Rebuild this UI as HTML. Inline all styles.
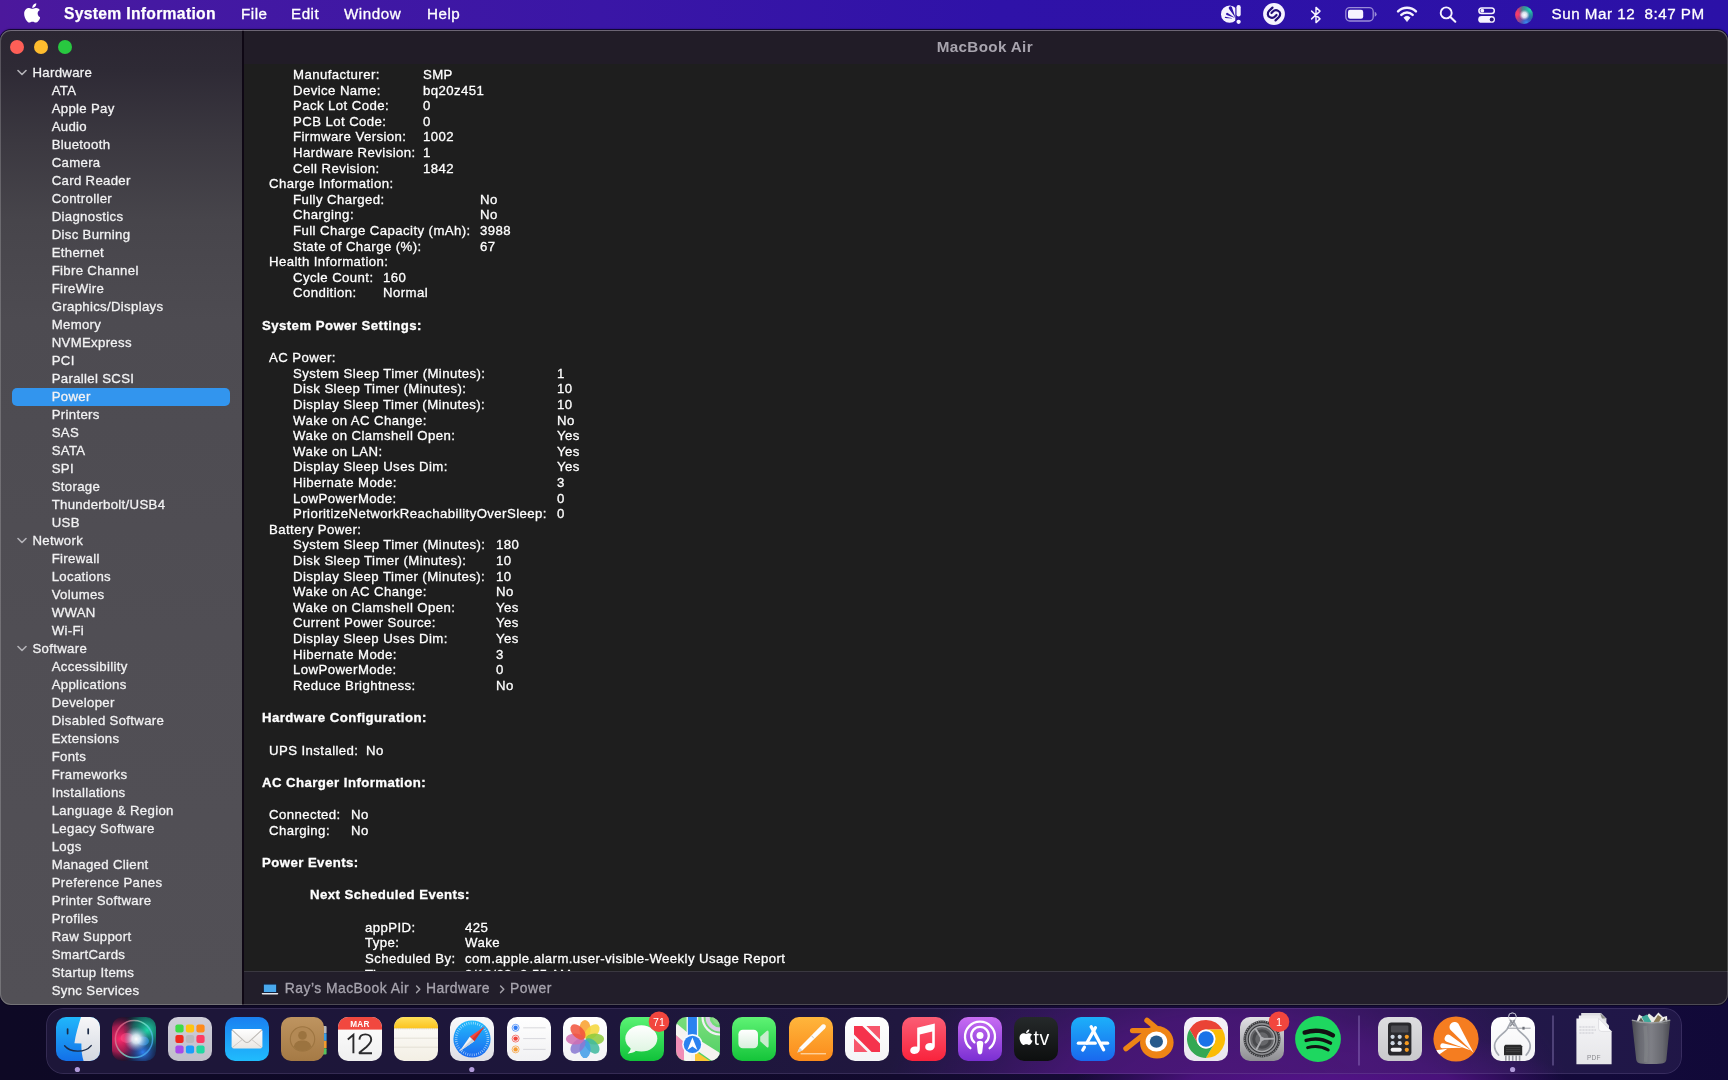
<!DOCTYPE html>
<html lang="en">
<head>
<meta charset="utf-8">
<title>System Information</title>
<style>
*{box-sizing:border-box;margin:0;padding:0}
html,body{width:1728px;height:1080px;overflow:hidden}
body{position:relative;font-family:"Liberation Sans",sans-serif;color:#fff;background:#120a32;-webkit-font-smoothing:antialiased}
#wall{position:absolute;left:0;top:0;width:1728px;height:1080px;
 background:
  radial-gradient(ellipse 250px 70px at 1320px 1092px, rgba(84,20,138,1) 0%, rgba(74,18,124,.96) 55%, rgba(56,15,102,.6) 80%, rgba(36,12,76,0) 100%),
  linear-gradient(90deg,#0e0925 0px,#0f0928 600px,#120a2e 900px,#160b36 1100px,#170b3a 1400px,#130a3a 1600px,#110938 1728px);}
/* ---------- menu bar ---------- */
#menubar{will-change:transform;position:absolute;left:0;top:0;width:1728px;height:44px;
 background:linear-gradient(90deg,#4c189c 0px,#4519a2 150px,#3a16a6 600px,#2f12a8 1000px,#2b11a7 1728px);}
#menubar .mi{position:absolute;top:0;height:28px;line-height:28px;font-size:15.2px;letter-spacing:.52px;color:#fff;white-space:nowrap;-webkit-text-stroke:.3px #fff}
#menubar .mi.app{font-weight:bold;font-size:15.7px;letter-spacing:.3px;-webkit-text-stroke:.25px #fff}
#menubar svg{position:absolute}
/* ---------- window ---------- */
#win{position:absolute;left:0;top:30px;width:1728px;height:975px;border-radius:11px;overflow:hidden;background:#1e1e1e;
 box-shadow:0 0 0 1px rgba(10,5,30,.7),0 -1px 1.5px rgba(10,5,30,.55)}
#winedge{position:absolute;left:0;top:30px;width:1728px;height:975px;border-radius:11px;pointer-events:none;
 box-shadow:inset 0 0 0 1px rgba(255,255,255,.2),inset 0 1px 0 rgba(225,205,255,.2)}
#side{will-change:transform;position:absolute;left:0;top:0;width:242px;height:975px;
 background:linear-gradient(180deg,#2b2632 0px,#2e2a35 40px,#3b3840 110px,#47454b 190px,#4d4b51 290px,#504e54 600px,#525056 975px)}
#divider{position:absolute;left:242px;top:0;width:2px;height:975px;background:#0e0714}
.tl{position:absolute;top:10px;width:14px;height:14px;border-radius:50%}
.sb{position:absolute;height:18px;line-height:18px;font-size:13.2px;color:#f2f2f3;white-space:nowrap;letter-spacing:.32px;-webkit-text-stroke:.3px #f2f2f3}
.sb.g{left:32.5px}
.sb.c{left:51.7px}
#sbt{position:absolute;left:0;top:0;width:242px;height:975px;will-change:transform;transform:translateY(.55px)}
.chev{position:absolute;left:16.8px}
.sel{position:absolute;left:12px;width:218px;height:18px;border-radius:5px;background:#3295ee}
#tbar{will-change:transform;position:absolute;left:244px;top:0;width:1484px;height:34px;background:#211c27}
#title{position:absolute;left:-1.2px;width:1484px;top:.8px;height:32px;line-height:32px;text-align:center;font-size:15.2px;font-weight:bold;color:#a8a4ae;letter-spacing:.36px}
#content{will-change:transform;position:absolute;left:244px;top:34px;width:1484px;height:907px;background:#1e1e1e;overflow:hidden}
.ml{position:absolute;height:15.6px;line-height:15.6px;font-size:13.2px;letter-spacing:.42px;color:#fff;white-space:nowrap;-webkit-text-stroke:.3px #fff}
.ml.b{height:18px;line-height:18px;font-weight:bold;letter-spacing:.44px;-webkit-text-stroke:.32px #fff}
#pbar{will-change:transform;position:absolute;left:244px;top:941px;width:1484px;height:34px;background:#221e2a;border-top:1px solid #3a3840}
#pbar .pt{position:absolute;top:.3px;height:32px;line-height:32px;font-size:13.9px;color:#a7a4ae;white-space:nowrap;letter-spacing:.47px;-webkit-text-stroke:.3px #a7a4ae}
#pbar .pc{position:absolute;top:12px}
#pbar .pc path{fill:none;stroke:#a3a1a9;stroke-width:1.5;stroke-linecap:round;stroke-linejoin:round}
/* ---------- dock ---------- */
#dock{position:absolute;left:46px;top:1007.5px;width:1636px;height:66px;border-radius:17px;
 background:radial-gradient(ellipse 345px 190px at 1182px 100px, rgba(76,23,122,.96) 0%, rgba(72,23,118,.92) 48%, rgba(60,22,104,.55) 74%, rgba(44,22,84,0) 100%),rgba(72,58,112,.27);
 box-shadow:inset 0 0 0 1px rgba(190,170,230,.15)}
.di{position:absolute;overflow:visible;will-change:transform}
.dot{position:absolute;top:1066.4px;width:5.2px;height:5.2px;border-radius:50%;background:#b6a3dc}
.dsep{position:absolute;top:1015.5px;width:1.2px;height:50px;background:rgba(190,170,235,.5)}
</style>
</head>
<body>
<div id="wall"></div>

<div id="menubar">
<svg style="left:23.7px;top:1.9px" width="16.46" height="21.94" viewBox="0 0 384 512"><path fill="#fff" d="M318.7 268.7c-.2-36.7 16.4-64.4 50-84.8-18.8-26.9-47.2-41.7-84.7-44.6-35.5-2.8-74.3 20.7-88.5 20.7-15 0-49.4-19.7-76.4-19.7C63.3 141.2 4 184.8 4 273.5q0 39.3 14.4 81.2c12.8 36.7 59 126.7 107.2 125.2 25.2-.6 43-17.9 75.8-17.9 31.8 0 48.3 17.9 76.4 17.9 48.6-.7 90.4-82.5 102.6-119.3-65.2-30.7-61.7-90-61.7-91.9zm-56.6-164.2c27.3-32.4 24.8-61.9 24-72.5-24.1 1.4-52 16.4-67.9 34.9-17.5 19.800-27.800 44.300-25.600 71.900 26.100 2 49.900-11.400 69.500-34.300z"/></svg>
<div class="mi app" style="left:64px">System Information</div>
<div class="mi" style="left:241px">File</div>
<div class="mi" style="left:291px">Edit</div>
<div class="mi" style="left:344px">Window</div>
<div class="mi" style="left:427px">Help</div>
<svg style="left:1218px;top:0" width="28" height="28" viewBox="-14 -14 28 28"><defs><mask id="m1"><rect x="-14" y="-14" width="28" height="28" fill="#000"/><circle cx="-2.4" cy="0.2" r="8.6" fill="#fff"/><path d="M3.60 4.00 L-0.09 -6.78 A1.7 1.7 0 0 0 -3.11 -5.22 Z" fill="#000"/><path d="M3.20 4.00 L-4.29 -1.03 A1.15 1.15 0 0 0 -5.31 1.03 Z" fill="#000"/><path d="M1.60 4.40 L-6.53 2.80 A0.6 0.6 0 0 0 -6.67 4.00 Z" fill="#000"/><rect x="3.3" y="-11" width="6.6" height="24" rx="3" fill="#000"/></mask></defs><rect x="-14" y="-14" width="28" height="28" fill="#f6f3ff" mask="url(#m1)"/><rect x="4.5" y="-8.9" width="4.2" height="11.4" rx="2.1" fill="#f6f3ff"/><circle cx="6.600" cy="7.8" r="2.15" fill="#f6f3ff"/></svg>
<svg style="left:1259.8px;top:0.3px" width="28" height="28" viewBox="-14 -14 28 28"><circle r="10.9" fill="#f6f3ff"/><g fill="none" stroke="#220d78" stroke-width="2.2" stroke-linecap="round"><path d="M-1.5 -6.4 L-4.8 -3.2 C-7 -1 -6.5 1.8 -4.2 3.1 C-2.3 4.2 -0.1 3.6 1.3 2.2 L2.5 1"/><path d="M1.5 6.4 L4.8 3.2 C7 1 6.500 -1.8 4.2 -3.1 C2.3 -4.2 0.1 -3.6 -1.3 -2.2 L-2.5 -1"/></g></svg>
<svg style="left:1305.7px;top:5px" width="20" height="20" viewBox="-10 -10 20 20"><path d="M-4.4 -3.9 L4 3.9 L0 7.6 L0 -7.6 L4 -3.9 L-4.4 3.9" fill="none" stroke="#f6f3ff" stroke-width="1.45" stroke-linejoin="round" stroke-linecap="round"/></svg>
<svg style="left:1343px;top:4px" width="36" height="20" viewBox="0 0 36 20"><rect x="2.8" y="3.6" width="27.4" height="13.4" rx="3.9" fill="none" stroke="#f6f3ff" stroke-opacity=".55" stroke-width="1.3"/><path d="M31.7 7.8 Q33.6 8.6 33.6 10.3 Q33.6 12 31.7 12.8 Z" fill="#f6f3ff" fill-opacity=".55"/><rect x="5" y="5.8" width="15.2" height="9" rx="2.1" fill="#f6f3ff"/></svg>
<svg style="left:1395.4px;top:2px" width="24" height="24" viewBox="-12 -12 24 24"><path d="M-8.93 -2.68 A13.1 13.1 0 0 1 8.93 -2.68" fill="none" stroke="#f6f3ff" stroke-width="2.5" stroke-linecap="round"/><path d="M-5.66 0.83 A8.3 8.3 0 0 1 5.66 0.83" fill="none" stroke="#f6f3ff" stroke-width="2.5" stroke-linecap="round"/><path d="M0 7.5 L-3.07 3.61 A4.5 4.5 0 0 1 3.07 3.61 Z" fill="#f6f3ff" stroke="#f6f3ff" stroke-width=".8" stroke-linejoin="round"/></svg>
<svg style="left:1436px;top:3px" width="24" height="24" viewBox="0 0 24 24"><circle cx="10.2" cy="9.9" r="5.5" fill="none" stroke="#f6f3ff" stroke-width="1.9"/><path d="M14.4 14.1 L19.3 18.7" stroke="#f6f3ff" stroke-width="2.1" stroke-linecap="round"/></svg>
<svg style="left:1475px;top:4px" width="24" height="22" viewBox="0 0 24 22"><rect x="3.9" y="3.9" width="15.4" height="5.6" rx="2.8" fill="none" stroke="#f6f3ff" stroke-width="1.5"/><circle cx="7.3" cy="6.7" r="1.9" fill="#f6f3ff"/><rect x="3.2" y="12" width="16.8" height="6.8" rx="3.4" fill="#f6f3ff"/><circle cx="16.7" cy="15.4" r="2" fill="#2a127e"/></svg>
<svg style="left:1513px;top:3.6px" width="22" height="22" viewBox="-11 -11 22 22"><defs><clipPath id="so"><circle r="8.9"/></clipPath><radialGradient id="s1" cx=".2" cy=".45" r=".6"><stop offset="0" stop-color="#ff3b6b"/><stop offset=".6" stop-color="#d83a72" stop-opacity=".8"/><stop offset="1" stop-color="#7a2a8a" stop-opacity="0"/></radialGradient><radialGradient id="s2" cx=".78" cy=".25" r=".55"><stop offset="0" stop-color="#25d8b6"/><stop offset=".65" stop-color="#1f9f9a" stop-opacity=".7"/><stop offset="1" stop-color="#1f6f9a" stop-opacity="0"/></radialGradient><radialGradient id="s3" cx=".6" cy=".85" r=".5"><stop offset="0" stop-color="#3a8af5"/><stop offset="1" stop-color="#2a4ab0" stop-opacity="0"/></radialGradient><radialGradient id="s4" cx=".52" cy=".5" r=".24"><stop offset="0" stop-color="#fff"/><stop offset=".5" stop-color="#f4f4ff" stop-opacity=".8"/><stop offset="1" stop-color="#ccd" stop-opacity="0"/></radialGradient></defs><g clip-path="url(#so)"><rect x="-11" y="-11" width="22" height="22" fill="#3a3a8a"/><rect x="-11" y="-11" width="22" height="22" fill="url(#s1)"/><rect x="-11" y="-11" width="22" height="22" fill="url(#s2)"/><rect x="-11" y="-11" width="22" height="22" fill="url(#s3)"/><rect x="-11" y="-11" width="22" height="22" fill="url(#s4)"/></g></svg>
<div class="mi" style="left:1551.6px;letter-spacing:.5px">Sun Mar 12&nbsp; 8:47 PM</div>
</div>

<div id="win">
 <div id="side">
  <div class="tl" style="left:10px;background:#fe5f57"></div>
  <div class="tl" style="left:34px;background:#febc2e"></div>
  <div class="tl" style="left:58px;background:#28c840"></div>
<svg class="chev" style="top:39.4px" width="10" height="8" viewBox="0 0 10 8"><path d="M1 1.5 L5 5.5 L9 1.5" fill="none" stroke="#b4b3b8" stroke-width="1.6" stroke-linecap="round" stroke-linejoin="round"/></svg>
<div class="sel" style="top:357.5px"></div>
<svg class="chev" style="top:507.4px" width="10" height="8" viewBox="0 0 10 8"><path d="M1 1.5 L5 5.5 L9 1.5" fill="none" stroke="#b4b3b8" stroke-width="1.6" stroke-linecap="round" stroke-linejoin="round"/></svg>
<svg class="chev" style="top:615.4px" width="10" height="8" viewBox="0 0 10 8"><path d="M1 1.5 L5 5.5 L9 1.5" fill="none" stroke="#b4b3b8" stroke-width="1.6" stroke-linecap="round" stroke-linejoin="round"/></svg>
<div id="sbt"><div class="sb g" style="top:33px">Hardware</div>
<div class="sb c" style="top:51px">ATA</div>
<div class="sb c" style="top:69px">Apple Pay</div>
<div class="sb c" style="top:87px">Audio</div>
<div class="sb c" style="top:105px">Bluetooth</div>
<div class="sb c" style="top:123px">Camera</div>
<div class="sb c" style="top:141px">Card Reader</div>
<div class="sb c" style="top:159px">Controller</div>
<div class="sb c" style="top:177px">Diagnostics</div>
<div class="sb c" style="top:195px">Disc Burning</div>
<div class="sb c" style="top:213px">Ethernet</div>
<div class="sb c" style="top:231px">Fibre Channel</div>
<div class="sb c" style="top:249px">FireWire</div>
<div class="sb c" style="top:267px">Graphics/Displays</div>
<div class="sb c" style="top:285px">Memory</div>
<div class="sb c" style="top:303px">NVMExpress</div>
<div class="sb c" style="top:321px">PCI</div>
<div class="sb c" style="top:339px">Parallel SCSI</div>
<div class="sb c" style="top:357px">Power</div>
<div class="sb c" style="top:375px">Printers</div>
<div class="sb c" style="top:393px">SAS</div>
<div class="sb c" style="top:411px">SATA</div>
<div class="sb c" style="top:429px">SPI</div>
<div class="sb c" style="top:447px">Storage</div>
<div class="sb c" style="top:465px">Thunderbolt/USB4</div>
<div class="sb c" style="top:483px">USB</div>
<div class="sb g" style="top:501px">Network</div>
<div class="sb c" style="top:519px">Firewall</div>
<div class="sb c" style="top:537px">Locations</div>
<div class="sb c" style="top:555px">Volumes</div>
<div class="sb c" style="top:573px">WWAN</div>
<div class="sb c" style="top:591px">Wi-Fi</div>
<div class="sb g" style="top:609px">Software</div>
<div class="sb c" style="top:627px">Accessibility</div>
<div class="sb c" style="top:645px">Applications</div>
<div class="sb c" style="top:663px">Developer</div>
<div class="sb c" style="top:681px">Disabled Software</div>
<div class="sb c" style="top:699px">Extensions</div>
<div class="sb c" style="top:717px">Fonts</div>
<div class="sb c" style="top:735px">Frameworks</div>
<div class="sb c" style="top:753px">Installations</div>
<div class="sb c" style="top:771px">Language &amp; Region</div>
<div class="sb c" style="top:789px">Legacy Software</div>
<div class="sb c" style="top:807px">Logs</div>
<div class="sb c" style="top:825px">Managed Client</div>
<div class="sb c" style="top:843px">Preference Panes</div>
<div class="sb c" style="top:861px">Printer Software</div>
<div class="sb c" style="top:879px">Profiles</div>
<div class="sb c" style="top:897px">Raw Support</div>
<div class="sb c" style="top:915px">SmartCards</div>
<div class="sb c" style="top:933px">Startup Items</div>
<div class="sb c" style="top:951px">Sync Services</div></div>
 </div>
 <div id="divider"></div>
 <div id="tbar"><div id="title">MacBook Air</div></div>
 <div id="content">
<div class="ml" style="top:-12.60px;left:49px">Serial Number:</div>
<div class="ml" style="top:-12.60px;left:179px">D865123A1BCDKRNBY</div>
<div class="ml" style="top:3.00px;left:49px">Manufacturer:</div>
<div class="ml" style="top:3.00px;left:179px">SMP</div>
<div class="ml" style="top:18.60px;left:49px">Device Name:</div>
<div class="ml" style="top:18.60px;left:179px">bq20z451</div>
<div class="ml" style="top:34.20px;left:49px">Pack Lot Code:</div>
<div class="ml" style="top:34.20px;left:179px">0</div>
<div class="ml" style="top:49.80px;left:49px">PCB Lot Code:</div>
<div class="ml" style="top:49.80px;left:179px">0</div>
<div class="ml" style="top:65.40px;left:49px">Firmware Version:</div>
<div class="ml" style="top:65.40px;left:179px">1002</div>
<div class="ml" style="top:81.00px;left:49px">Hardware Revision:</div>
<div class="ml" style="top:81.00px;left:179px">1</div>
<div class="ml" style="top:96.60px;left:49px">Cell Revision:</div>
<div class="ml" style="top:96.60px;left:179px">1842</div>
<div class="ml" style="top:112.20px;left:25px">Charge Information:</div>
<div class="ml" style="top:127.80px;left:49px">Fully Charged:</div>
<div class="ml" style="top:127.80px;left:236px">No</div>
<div class="ml" style="top:143.40px;left:49px">Charging:</div>
<div class="ml" style="top:143.40px;left:236px">No</div>
<div class="ml" style="top:159.00px;left:49px">Full Charge Capacity (mAh):</div>
<div class="ml" style="top:159.00px;left:236px">3988</div>
<div class="ml" style="top:174.60px;left:49px">State of Charge (%):</div>
<div class="ml" style="top:174.60px;left:236px">67</div>
<div class="ml" style="top:190.20px;left:25px">Health Information:</div>
<div class="ml" style="top:205.80px;left:49px">Cycle Count:</div>
<div class="ml" style="top:205.80px;left:139px">160</div>
<div class="ml" style="top:221.40px;left:49px">Condition:</div>
<div class="ml" style="top:221.40px;left:139px">Normal</div>
<div class="ml b" style="top:252.60px;left:18px">System Power Settings:</div>
<div class="ml" style="top:286.20px;left:25px">AC Power:</div>
<div class="ml" style="top:301.80px;left:49px">System Sleep Timer (Minutes):</div>
<div class="ml" style="top:301.80px;left:313px">1</div>
<div class="ml" style="top:317.40px;left:49px">Disk Sleep Timer (Minutes):</div>
<div class="ml" style="top:317.40px;left:313px">10</div>
<div class="ml" style="top:333.00px;left:49px">Display Sleep Timer (Minutes):</div>
<div class="ml" style="top:333.00px;left:313px">10</div>
<div class="ml" style="top:348.60px;left:49px">Wake on AC Change:</div>
<div class="ml" style="top:348.60px;left:313px">No</div>
<div class="ml" style="top:364.20px;left:49px">Wake on Clamshell Open:</div>
<div class="ml" style="top:364.20px;left:313px">Yes</div>
<div class="ml" style="top:379.80px;left:49px">Wake on LAN:</div>
<div class="ml" style="top:379.80px;left:313px">Yes</div>
<div class="ml" style="top:395.40px;left:49px">Display Sleep Uses Dim:</div>
<div class="ml" style="top:395.40px;left:313px">Yes</div>
<div class="ml" style="top:411.00px;left:49px">Hibernate Mode:</div>
<div class="ml" style="top:411.00px;left:313px">3</div>
<div class="ml" style="top:426.60px;left:49px">LowPowerMode:</div>
<div class="ml" style="top:426.60px;left:313px">0</div>
<div class="ml" style="top:442.20px;left:49px">PrioritizeNetworkReachabilityOverSleep:</div>
<div class="ml" style="top:442.20px;left:313px">0</div>
<div class="ml" style="top:457.80px;left:25px">Battery Power:</div>
<div class="ml" style="top:473.40px;left:49px">System Sleep Timer (Minutes):</div>
<div class="ml" style="top:473.40px;left:252px">180</div>
<div class="ml" style="top:489.00px;left:49px">Disk Sleep Timer (Minutes):</div>
<div class="ml" style="top:489.00px;left:252px">10</div>
<div class="ml" style="top:504.60px;left:49px">Display Sleep Timer (Minutes):</div>
<div class="ml" style="top:504.60px;left:252px">10</div>
<div class="ml" style="top:520.20px;left:49px">Wake on AC Change:</div>
<div class="ml" style="top:520.20px;left:252px">No</div>
<div class="ml" style="top:535.80px;left:49px">Wake on Clamshell Open:</div>
<div class="ml" style="top:535.80px;left:252px">Yes</div>
<div class="ml" style="top:551.40px;left:49px">Current Power Source:</div>
<div class="ml" style="top:551.40px;left:252px">Yes</div>
<div class="ml" style="top:567.00px;left:49px">Display Sleep Uses Dim:</div>
<div class="ml" style="top:567.00px;left:252px">Yes</div>
<div class="ml" style="top:582.60px;left:49px">Hibernate Mode:</div>
<div class="ml" style="top:582.60px;left:252px">3</div>
<div class="ml" style="top:598.20px;left:49px">LowPowerMode:</div>
<div class="ml" style="top:598.20px;left:252px">0</div>
<div class="ml" style="top:613.80px;left:49px">Reduce Brightness:</div>
<div class="ml" style="top:613.80px;left:252px">No</div>
<div class="ml b" style="top:645.00px;left:18px">Hardware Configuration:</div>
<div class="ml" style="top:678.60px;left:25px">UPS Installed:</div>
<div class="ml" style="top:678.60px;left:122px">No</div>
<div class="ml b" style="top:709.80px;left:18px">AC Charger Information:</div>
<div class="ml" style="top:743.40px;left:25px">Connected:</div>
<div class="ml" style="top:743.40px;left:107px">No</div>
<div class="ml" style="top:759.00px;left:25px">Charging:</div>
<div class="ml" style="top:759.00px;left:107px">No</div>
<div class="ml b" style="top:790.20px;left:18px">Power Events:</div>
<div class="ml b" style="top:822.20px;left:66px">Next Scheduled Events:</div>
<div class="ml" style="top:855.80px;left:121px">appPID:</div>
<div class="ml" style="top:855.80px;left:221px">425</div>
<div class="ml" style="top:871.40px;left:121px">Type:</div>
<div class="ml" style="top:871.40px;left:221px">Wake</div>
<div class="ml" style="top:887.00px;left:121px">Scheduled By:</div>
<div class="ml" style="top:887.00px;left:221px">com.apple.alarm.user-visible-Weekly Usage Report</div>
<div class="ml" style="top:902.60px;left:121px">Time:</div>
<div class="ml" style="top:902.60px;left:221px">3/13/23, 2:55 AM</div>
 </div>
 <div id="pbar">
  <svg style="position:absolute;left:17px;top:11.4px" width="18" height="13" viewBox="0 0 18 13"><rect x="1.9" y="0.6" width="14.2" height="9.4" rx="1.1" fill="#14213c"/><rect x="2.9" y="1.6" width="12.2" height="7.4" fill="#49a9ee"/><path d="M0.6 10.1h16.8l-.7 1.5h-15.4z" fill="#e8e8ec"/></svg>
  <div class="pt" style="left:40.8px">Ray’s MacBook Air</div>
  <svg class="pc" style="left:171px" width="7" height="10" viewBox="0 0 7 10"><path d="M1.6 2 L4.8 5.3 L1.6 8.6"/></svg>
  <div class="pt" style="left:182px">Hardware</div>
  <svg class="pc" style="left:255px" width="7" height="10" viewBox="0 0 7 10"><path d="M1.6 2 L4.8 5.3 L1.6 8.6"/></svg>
  <div class="pt" style="left:266px">Power</div>
 </div>
</div>
<div id="winedge"></div>

<div id="dock"></div>
<svg class="di" style="left:49.5px;top:1010.6px" width="56" height="56" viewBox="-28 -28 56 56"><defs><linearGradient id="fA" x1="0" y1="0" x2="0" y2="1"><stop offset="0" stop-color="#20b7fb"/><stop offset="1" stop-color="#1370e8"/></linearGradient><linearGradient id="fB" x1="0" y1="0" x2="0" y2="1"><stop offset="0" stop-color="#f7f7f9"/><stop offset="1" stop-color="#d3d8e0"/></linearGradient><clipPath id="fC"><rect x="-22" y="-22" width="44" height="44" rx="10" ry="10"/></clipPath></defs><g clip-path="url(#fC)"><rect x="-22" y="-22" width="44" height="44" fill="url(#fA)"/><path d="M3 -22 C0.5 -14 -2.5 -4 -3.6 4.2 L3.4 4.4 C3.2 11 4 17 5.6 22 L22 22 L22 -22 Z" fill="url(#fB)"/></g><path d="M-10.4 -10 v4.6 M10.2 -10 v4.6" stroke="#1b2a47" stroke-width="1.7" stroke-linecap="round" fill="none"/><path d="M-13.4 6.8 C-8 13.6 7 14.2 13.2 6.6" stroke="#1b2a47" stroke-width="1.4" stroke-linecap="round" fill="none"/><path d="M3 -22 C0.5 -14 -2.5 -4 -3.6 4.2 L3.4 4.4 C3.2 11 4 17 5.6 22" stroke="#1b2a47" stroke-width=".9" fill="none" opacity=".0"/><circle cx="-0.6" cy="30.5" r="2.6" fill="#b09ada"/></svg>
<svg class="di" style="left:105.9px;top:1010.6px" width="56" height="56" viewBox="-28 -28 56 56"><defs><clipPath id="sC"><rect x="-22" y="-22" width="44" height="44" rx="10" ry="10"/></clipPath><radialGradient id="sM" cx="0.18" cy="0.5" r="0.55"><stop offset="0" stop-color="#ff2a6d"/><stop offset=".55" stop-color="#c81e5a" stop-opacity=".75"/><stop offset="1" stop-color="#7a1040" stop-opacity="0"/></radialGradient><radialGradient id="sT" cx="0.8" cy="0.3" r="0.55"><stop offset="0" stop-color="#1fd6a8"/><stop offset=".6" stop-color="#12806f" stop-opacity=".7"/><stop offset="1" stop-color="#0b3c40" stop-opacity="0"/></radialGradient><radialGradient id="sB" cx="0.7" cy="0.8" r="0.45"><stop offset="0" stop-color="#2f7df0"/><stop offset="1" stop-color="#15306c" stop-opacity="0"/></radialGradient><radialGradient id="sW" cx="0.55" cy="0.5" r="0.28"><stop offset="0" stop-color="#ffffff"/><stop offset=".35" stop-color="#e9f6ff" stop-opacity=".85"/><stop offset="1" stop-color="#9ad" stop-opacity="0"/></radialGradient><linearGradient id="sR" x1="0" y1=".2" x2="1" y2=".8"><stop offset="0" stop-color="#ff4d7d"/><stop offset=".5" stop-color="#7df0d0"/><stop offset="1" stop-color="#3a9dff"/></linearGradient></defs><g clip-path="url(#sC)"><rect x="-22" y="-22" width="44" height="44" fill="#14132a"/><rect x="-22" y="-22" width="44" height="44" fill="url(#sM)"/><rect x="-22" y="-22" width="44" height="44" fill="url(#sT)"/><rect x="-22" y="-22" width="44" height="44" fill="url(#sB)"/><ellipse cx="-7" cy="-1" rx="6.5" ry="5" fill="#ff4f86" opacity=".55"/><ellipse cx="9" cy="2" rx="6" ry="4.5" fill="#3aa8ff" opacity=".55"/><rect x="-22" y="-22" width="44" height="44" fill="url(#sW)"/></g><circle r="18.6" fill="none" stroke="url(#sR)" stroke-opacity=".75" stroke-width="1.5"/></svg>
<svg class="di" style="left:162.3px;top:1010.6px" width="56" height="56" viewBox="-28 -28 56 56"><defs><linearGradient id="lA" x1="0" y1="0" x2="0" y2="1"><stop offset="0" stop-color="#d0ced9"/><stop offset="1" stop-color="#c0bfca"/></linearGradient></defs><rect x="-22" y="-22" width="44" height="44" rx="10" ry="10" fill="url(#lA)"/><rect x="-14.6" y="-14.6" width="8.2" height="8.2" rx="2.1" fill="#3edb48"/><rect x="-4.1" y="-14.6" width="8.2" height="8.2" rx="2.1" fill="#ffc412"/><rect x="6.4" y="-14.6" width="8.2" height="8.2" rx="2.1" fill="#ff8a1c"/><rect x="-14.6" y="-4.1" width="8.2" height="8.2" rx="2.1" fill="#f2281d"/><rect x="-4.1" y="-4.1" width="8.2" height="8.2" rx="2.1" fill="#b9b9bd"/><rect x="6.4" y="-4.1" width="8.2" height="8.2" rx="2.1" fill="#ff3b63"/><rect x="-14.6" y="6.4" width="8.2" height="8.2" rx="2.1" fill="#a74bea"/><rect x="-4.1" y="6.4" width="8.2" height="8.2" rx="2.1" fill="#1b9dfb"/><rect x="6.4" y="6.4" width="8.2" height="8.2" rx="2.1" fill="#20d7a1"/></svg>
<svg class="di" style="left:218.7px;top:1010.6px" width="56" height="56" viewBox="-28 -28 56 56"><defs><linearGradient id="mA" x1="0" y1="0" x2="0" y2="1"><stop offset="0" stop-color="#1a80f1"/><stop offset="1" stop-color="#20bcfd"/></linearGradient><linearGradient id="mB" x1="0" y1="0" x2="0" y2="1"><stop offset="0" stop-color="#ffffff"/><stop offset="1" stop-color="#e9e6e2"/></linearGradient></defs><rect x="-22" y="-22" width="44" height="44" rx="10" ry="10" fill="url(#mA)"/><rect x="-15.4" y="-10" width="30.8" height="19.4" rx="2.2" fill="url(#mB)"/><path d="M-15 -9.2 L-2.2 2.6 Q0 4.4 2.2 2.6 L15 -9.2" fill="none" stroke="#bdb9b4" stroke-width="1.1" stroke-linejoin="round"/><path d="M-15 8.8 L-4.6 0.4 M15 8.8 L4.6 0.4" fill="none" stroke="#cfcbc6" stroke-width="1"/></svg>
<svg class="di" style="left:275.1px;top:1010.6px" width="56" height="56" viewBox="-28 -28 56 56"><defs><linearGradient id="cA" x1="0" y1="0" x2="0" y2="1"><stop offset="0" stop-color="#be9460"/><stop offset="1" stop-color="#a57a45"/></linearGradient></defs><rect x="19" y="-13" width="4.6" height="7.4" rx="1" fill="#b9b9bb"/><rect x="19" y="-5.6" width="4.6" height="7.4" fill="#3b9fe6"/><rect x="19" y="1.8" width="4.6" height="7.4" fill="#f49b2c"/><rect x="19" y="9.2" width="4.6" height="6.4" rx="1" fill="#56c25c"/><rect x="-22" y="-22" width="43" height="44" rx="10" ry="10" fill="url(#cA)"/><circle cx="-0.5" cy="0" r="12.2" fill="#b38955" stroke="#9d7541" stroke-width="1.1"/><circle cx="-0.5" cy="-3.6" r="4.3" fill="#9b733f"/><path d="M-9.3 7.8 C-8 2.6 -4.5 1.6 -0.5 1.6 C3.5 1.6 7 2.6 8.3 7.8 C6 10.6 3 12 -0.5 12 C-4 12 -7 10.6 -9.3 7.8 Z" fill="#9b733f"/></svg>
<svg class="di" style="left:331.5px;top:1010.6px" width="56" height="56" viewBox="-28 -28 56 56"><defs><linearGradient id="kA" x1="0" y1="0" x2="0" y2="1"><stop offset="0" stop-color="#ffffff"/><stop offset="1" stop-color="#efefef"/></linearGradient><clipPath id="kC"><rect x="-22" y="-22" width="44" height="44" rx="10" ry="10"/></clipPath></defs><g clip-path="url(#kC)"><rect x="-22" y="-22" width="44" height="44" fill="url(#kA)"/><rect x="-22" y="-22" width="44" height="12.6" fill="#f1483f"/></g><text x="0" y="-12.4" text-anchor="middle" font-family="Liberation Sans, sans-serif" font-weight="bold" font-size="8.2" fill="#fff" letter-spacing=".3">MAR</text><path d="M-12.2 0.4 L-6.6 -4.2 L-6.6 14.2" fill="none" stroke="#2a2a2c" stroke-width="1.9" stroke-linejoin="miter"/><path d="M-0.6 0.6 C-0.4 -3 2.4 -4.6 5.4 -4.6 C8.8 -4.6 11.2 -2.6 11.2 0.6 C11.2 3.4 9.4 5.4 6.4 8 L-0.4 13.6 L-0.4 14.2 L12 14.2" fill="none" stroke="#2a2a2c" stroke-width="1.9" stroke-linejoin="round"/></svg>
<svg class="di" style="left:387.9px;top:1010.6px" width="56" height="56" viewBox="-28 -28 56 56"><defs><linearGradient id="nA" x1="0" y1="0" x2="0" y2="1"><stop offset="0" stop-color="#ffe05a"/><stop offset="1" stop-color="#fbc31e"/></linearGradient><linearGradient id="nB" x1="0" y1="0" x2="0" y2="1"><stop offset="0" stop-color="#fefefd"/><stop offset="1" stop-color="#f3efe4"/></linearGradient><clipPath id="nC"><rect x="-22" y="-22" width="44" height="44" rx="10" ry="10"/></clipPath></defs><g clip-path="url(#nC)"><rect x="-22" y="-22" width="44" height="44" fill="url(#nB)"/><rect x="-22" y="-22" width="44" height="11.4" fill="url(#nA)"/><path d="M-22 -10.2 H22" stroke="#c9c3b2" stroke-width=".7" stroke-dasharray="1 .9"/><path d="M-22 -0.8 H22 M-22 8.2 H22" stroke="#dedacf" stroke-width=".8"/></g></svg>
<svg class="di" style="left:444.3px;top:1010.6px" width="56" height="56" viewBox="-28 -28 56 56"><defs><linearGradient id="aA" x1="0" y1="0" x2="0" y2="1"><stop offset="0" stop-color="#f9f9fb"/><stop offset="1" stop-color="#dfdfe5"/></linearGradient><linearGradient id="aB" x1="0" y1="0" x2="0" y2="1"><stop offset="0" stop-color="#23bbfc"/><stop offset="1" stop-color="#1a68ee"/></linearGradient></defs><rect x="-22" y="-22" width="44" height="44" rx="10" ry="10" fill="url(#aA)"/><circle r="18.6" fill="url(#aB)"/><circle r="15.9" fill="none" stroke="#ffffff" stroke-opacity=".8" stroke-width="2.6" stroke-dasharray=".55 1.67"/><path d="M12.6 -12.6 L2.3 2.3 L-2.3 -2.3 Z" fill="#f5473d"/><path d="M-12.6 12.6 L2.3 2.3 L-2.3 -2.3 Z" fill="#f4f4f6"/><path d="M12.6 -12.6 L2.3 2.3 L0 0 Z" fill="#d2352c"/><path d="M-12.6 12.6 L2.3 2.3 L0 0 Z" fill="#cfd3da"/><circle cx="-0.2" cy="30.5" r="2.6" fill="#b09ada"/></svg>
<svg class="di" style="left:500.7px;top:1010.6px" width="56" height="56" viewBox="-28 -28 56 56"><defs><linearGradient id="rA" x1="0" y1="0" x2="0" y2="1"><stop offset="0" stop-color="#ffffff"/><stop offset="1" stop-color="#f1f1f3"/></linearGradient></defs><rect x="-22" y="-22" width="44" height="44" rx="10" ry="10" fill="url(#rA)"/><circle cx="-13.4" cy="-11.2" r="3.5" fill="none" stroke="#2f7cf6" stroke-width=".9" stroke-opacity=".75"/><circle cx="-13.4" cy="-11.2" r="2.2" fill="#2f7cf6"/><path d="M-5.8 -11.2 H16.6" stroke="#cfcfd4" stroke-width=".8"/><circle cx="-13.4" cy="-0.4" r="3.5" fill="none" stroke="#f1443b" stroke-width=".9" stroke-opacity=".75"/><circle cx="-13.4" cy="-0.4" r="2.2" fill="#f1443b"/><path d="M-5.8 -0.4 H16.6" stroke="#cfcfd4" stroke-width=".8"/><circle cx="-13.4" cy="10.4" r="3.5" fill="none" stroke="#f69b2f" stroke-width=".9" stroke-opacity=".75"/><circle cx="-13.4" cy="10.4" r="2.2" fill="#f69b2f"/><path d="M-5.8 10.4 H16.6" stroke="#cfcfd4" stroke-width=".8"/></svg>
<svg class="di" style="left:557.1px;top:1010.6px" width="56" height="56" viewBox="-28 -28 56 56"><defs><linearGradient id="pA" x1="0" y1="0" x2="0" y2="1"><stop offset="0" stop-color="#ffffff"/><stop offset="1" stop-color="#f3f3f5"/></linearGradient></defs><rect x="-22" y="-22" width="44" height="44" rx="10" ry="10" fill="url(#pA)"/><ellipse cx="0" cy="-9.9" rx="5.6" ry="9.2" fill="#f9a02c" fill-opacity=".86" transform="rotate(0)"/><ellipse cx="0" cy="-9.9" rx="5.6" ry="9.2" fill="#f5d63a" fill-opacity=".86" transform="rotate(45)"/><ellipse cx="0" cy="-9.9" rx="5.6" ry="9.2" fill="#8ecb3c" fill-opacity=".86" transform="rotate(90)"/><ellipse cx="0" cy="-9.9" rx="5.6" ry="9.2" fill="#40b99e" fill-opacity=".86" transform="rotate(135)"/><ellipse cx="0" cy="-9.9" rx="5.6" ry="9.2" fill="#409ce8" fill-opacity=".86" transform="rotate(180)"/><ellipse cx="0" cy="-9.9" rx="5.6" ry="9.2" fill="#8878d2" fill-opacity=".86" transform="rotate(225)"/><ellipse cx="0" cy="-9.9" rx="5.6" ry="9.2" fill="#d06fb2" fill-opacity=".86" transform="rotate(270)"/><ellipse cx="0" cy="-9.9" rx="5.6" ry="9.2" fill="#f1533b" fill-opacity=".86" transform="rotate(315)"/></svg>
<svg class="di" style="left:613.5px;top:1010.6px" width="56" height="56" viewBox="-28 -28 56 56"><defs><linearGradient id="gA" x1="0" y1="0" x2="0" y2="1"><stop offset="0" stop-color="#5af374"/><stop offset="1" stop-color="#10c23a"/></linearGradient><linearGradient id="gB" x1="0" y1="0" x2="0" y2="1"><stop offset="0" stop-color="#ffffff"/><stop offset="1" stop-color="#dff5e2"/></linearGradient></defs><rect x="-22" y="-22" width="44" height="44" rx="10" ry="10" fill="url(#gA)"/><path d="M-11.2 8.6 C-11.4 11.4 -12.6 13.2 -14.4 14.4 C-10.6 14.6 -7.6 13.4 -5.8 11.6 Z" fill="#e9f8eb"/><ellipse cx="-0.7" cy="-0.6" rx="16" ry="13.1" fill="url(#gB)"/><circle cx="17" cy="-17.2" r="10.3" fill="#f2463e"/><text x="17" y="-13.4" text-anchor="middle" font-family="Liberation Sans, sans-serif" font-size="10.6" fill="#fff">71</text></svg>
<svg class="di" style="left:669.9px;top:1010.6px" width="56" height="56" viewBox="-28 -28 56 56"><defs><clipPath id="pC"><rect x="-22" y="-22" width="44" height="44" rx="10" ry="10"/></clipPath><linearGradient id="pG" x1="0" y1="0" x2="0" y2="1"><stop offset="0" stop-color="#7ade7c"/><stop offset="1" stop-color="#4fcf63"/></linearGradient></defs><g clip-path="url(#pC)"><rect x="-22" y="-22" width="44" height="44" fill="url(#pG)"/><path d="M-22 -4 L-14 2 L-14 22 L-22 22 Z" fill="#f08db6"/><path d="M-22 -15 L-22 -4 L-14 3 L-14 22 L-7 22 L-7 8 Z" fill="#f7f5f2"/><path d="M-22 -16 L-10 -6 L22 14 L22 22 L14 22 L-6 8 L-22 -7 Z" fill="#f5f3f0"/><path d="M-3 12 L12 22 L-3 22 Z" fill="#fbc634"/><path d="M-7 10 L-3 12 L-3 22 L-7 22 Z" fill="#f3f1ee"/><circle cx="22" cy="-22" r="17.5" fill="none" stroke="#f3f0f5" stroke-width="2.2"/><circle cx="22" cy="-22" r="12.5" fill="none" stroke="#dccbe8" stroke-width="4"/><circle cx="22" cy="-22" r="8" fill="#8fdc8c"/><rect x="-11.4" y="-22" width="11.6" height="24" fill="#f4f8ff"/><rect x="-10.1" y="-22" width="9" height="24" fill="#2a82f0"/></g><circle cx="-5.6" cy="5.4" r="10.3" fill="#f4f8ff"/><circle cx="-5.6" cy="5.4" r="8.7" fill="#2a82f0"/><path d="M-5.6 -1.6 L-0.6 11 L-5.6 7.6 L-10.6 11 Z" fill="#fdfdff"/></svg>
<svg class="di" style="left:726.3px;top:1010.6px" width="56" height="56" viewBox="-28 -28 56 56"><defs><linearGradient id="tA" x1="0" y1="0" x2="0" y2="1"><stop offset="0" stop-color="#5ff375"/><stop offset="1" stop-color="#14c439"/></linearGradient><linearGradient id="tB" x1="0" y1="0" x2="0" y2="1"><stop offset="0" stop-color="#ffffff"/><stop offset="1" stop-color="#d9efdc"/></linearGradient></defs><rect x="-22" y="-22" width="44" height="44" rx="10" ry="10" fill="url(#tA)"/><rect x="-15.6" y="-9.2" width="19.6" height="18.4" rx="4.4" fill="url(#tB)"/><path d="M6.2 -2.2 L12.6 -8 Q14.6 -9.4 14.6 -7 L14.6 7 Q14.6 9.4 12.6 8 L6.2 2.2 Z" fill="#c9ecce"/></svg>
<svg class="di" style="left:782.7px;top:1010.6px" width="56" height="56" viewBox="-28 -28 56 56"><defs><linearGradient id="qA" x1="0" y1="0" x2="0" y2="1"><stop offset="0" stop-color="#ffb63c"/><stop offset="1" stop-color="#fb8a1b"/></linearGradient></defs><rect x="-22" y="-22" width="44" height="44" rx="10" ry="10" fill="url(#qA)"/><path d="M-10 14.8 H14.6" stroke="#ffe9c9" stroke-width="1" stroke-linecap="round"/><path d="M-13.6 13.6 L-11.4 8.6 L11.2 -14.4 Q13.4 -15.6 14.6 -13.6 Q15.4 -12 14 -10.6 L-8.6 11.6 Z" fill="#fdfcfa"/><path d="M-13.6 13.6 L-11.4 8.6 L-8.6 11.6 Z" fill="#d8d3cc"/><path d="M0.4 -3.4 L3 -0.6" stroke="#c9c4bc" stroke-width="1"/></svg>
<svg class="di" style="left:839.1px;top:1010.6px" width="56" height="56" viewBox="-28 -28 56 56"><defs><linearGradient id="wA" x1="0" y1="0" x2="0" y2="1"><stop offset="0" stop-color="#ffffff"/><stop offset="1" stop-color="#f4f4f6"/></linearGradient></defs><rect x="-22" y="-22" width="44" height="44" rx="10" ry="10" fill="url(#wA)"/><path d="M-13 -13 L-4.6 -13 L13 4.6 L13 13 L4.6 13 L-13 -4.6 Z" fill="#f5334c"/><path d="M-0.6 -13 L13 -13 L13 0.6 Z" fill="#f7566b"/><path d="M-13 -0.6 L-13 13 L0.6 13 Z" fill="#f7566b"/></svg>
<svg class="di" style="left:895.5px;top:1010.6px" width="56" height="56" viewBox="-28 -28 56 56"><defs><linearGradient id="uA" x1="0" y1="0" x2="0" y2="1"><stop offset="0" stop-color="#fb5d75"/><stop offset="1" stop-color="#f9233c"/></linearGradient></defs><rect x="-22" y="-22" width="44" height="44" rx="10" ry="10" fill="url(#uA)"/><path d="M-6.8 -11.2 L10.8 -15.4 L10.8 6.4 C10.8 9.6 8.4 11.6 5.4 11.6 C2.8 11.6 1.2 10 1.2 8 C1.2 5.6 3.4 4 6 4 C7 4 7.6 4.1 8.2 4.4 L8.2 -7.6 L-4.2 -4.6 L-4.2 9.8 C-4.2 13 -6.6 15 -9.6 15 C-12.2 15 -13.8 13.4 -13.8 11.4 C-13.8 9 -11.6 7.4 -9 7.4 C-8 7.4 -7.4 7.5 -6.8 7.8 Z" fill="#fff"/></svg>
<svg class="di" style="left:951.9px;top:1010.6px" width="56" height="56" viewBox="-28 -28 56 56"><defs><linearGradient id="oA" x1="0" y1="0" x2="0" y2="1"><stop offset="0" stop-color="#c86df3"/><stop offset="1" stop-color="#7a2fd2"/></linearGradient></defs><rect x="-22" y="-22" width="44" height="44" rx="10" ry="10" fill="url(#oA)"/><path d="M-9.6 9.2 A15 15 0 1 1 9.6 9.2" fill="none" stroke="#fff" stroke-width="2.3" stroke-linecap="round"/><path d="M-5.6 3.4 A8.8 8.8 0 1 1 5.6 3.4" fill="none" stroke="#fff" stroke-width="2.3" stroke-linecap="round"/><circle cx="0" cy="-3.6" r="3.5" fill="#fff"/><path d="M-3.3 4.6 Q-3.4 1.8 0 1.8 Q3.4 1.8 3.3 4.6 L2.2 13.6 Q2 15.4 0 15.4 Q-2 15.4 -2.2 13.6 Z" fill="#fff"/></svg>
<svg class="di" style="left:1008.3px;top:1010.6px" width="56" height="56" viewBox="-28 -28 56 56"><defs><linearGradient id="vA" x1="0" y1="0" x2="0" y2="1"><stop offset="0" stop-color="#25292a"/><stop offset="1" stop-color="#0d0f0f"/></linearGradient></defs><rect x="-22" y="-22" width="44" height="44" rx="10" ry="10" fill="url(#vA)"/><g transform="translate(-16.6,-10.6) scale(0.0345)"><path d="M318.7 268.7c-.2-36.7 16.4-64.4 50-84.8-18.8-26.9-47.2-41.7-84.7-44.6-35.5-2.8-74.3 20.7-88.5 20.7-15 0-49.4-19.7-76.4-19.7C63.3 141.2 4 184.8 4 273.5q0 39.3 14.4 81.2c12.8 36.7 59 126.7 107.2 125.2 25.2-.6 43-17.9 75.8-17.9 31.8 0 48.3 17.9 76.4 17.9 48.6-.7 90.4-82.5 102.6-119.3-65.2-30.7-61.7-90-61.7-91.9zm-56.6-164.2c27.3-32.4 24.8-61.9 24-72.5-24.1 1.4-52 16.4-67.9 34.9-17.5 19.8-27.8 44.3-25.6 71.9 26.1 2 49.9-11.4 69.500-34.300z" fill="#fff"/></g><text x="-2.6" y="6.4" font-family="Liberation Sans, sans-serif" font-size="19.5" fill="#fff" letter-spacing=".6">tv</text></svg>
<svg class="di" style="left:1064.7px;top:1010.6px" width="56" height="56" viewBox="-28 -28 56 56"><defs><linearGradient id="eA" x1="0" y1="0" x2="0" y2="1"><stop offset="0" stop-color="#1cb0fa"/><stop offset="1" stop-color="#1a68ee"/></linearGradient></defs><rect x="-22" y="-22" width="44" height="44" rx="10" ry="10" fill="url(#eA)"/><g fill="none" stroke="#fff" stroke-width="3.3" stroke-linecap="round"><path d="M-1.8 -12.2 L10.6 10.8"/><path d="M2.4 -11.2 L-6.2 4"/><path d="M-8.6 8.2 L-10.2 11"/><path d="M-14.6 4.2 H2.2"/><path d="M8.6 4.2 H14.6"/></g></svg>
<svg class="di" style="left:1121.1px;top:1010.6px" width="56" height="56" viewBox="-28 -28 56 56"><g fill="none" stroke="#ee8415" stroke-width="5.4" stroke-linecap="round" stroke-linejoin="round"><path d="M-2 -18.6 L12 -7"/><path d="M-16.4 -8.4 H8"/><path d="M-23 9.6 L-2 -7"/></g><path d="M-9 4 C-9 -6 -1 -13 8 -13 C18 -13 24.6 -5 24.6 3.4 C24.6 12 17.6 19.6 8 19.6 C-1 19.6 -9 13 -9 4 Z" fill="#ee8415"/><ellipse cx="7.4" cy="2.6" rx="10.8" ry="10" fill="#fff"/><ellipse cx="7.4" cy="2.6" rx="6.6" ry="6.2" fill="#265a8c"/></svg>
<svg class="di" style="left:1177.5px;top:1010.6px" width="56" height="56" viewBox="-28 -28 56 56"><defs><linearGradient id="hA" x1="0" y1="0" x2="0" y2="1"><stop offset="0" stop-color="#f6f4f8"/><stop offset="1" stop-color="#e9e6ee"/></linearGradient></defs><rect x="-22" y="-22" width="44" height="44" rx="10" ry="10" fill="url(#hA)"/><path d="M-16.40 -9.60 A19.0 19.0 0 0 1 16.51 -9.40 L0.00 -9.40 A9.4 9.4 0 0 0 -8.14 4.70 Z" fill="#ea4335"/><path d="M16.51 -9.40 A19.0 19.0 0 0 1 -0.12 19.00 L8.14 4.70 A9.4 9.4 0 0 0 0.00 -9.40 Z" fill="#fbbc05"/><path d="M-0.12 19.00 A19.0 19.0 0 0 1 -16.40 -9.60 L-8.14 4.70 A9.4 9.4 0 0 0 8.14 4.70 Z" fill="#34a853"/><circle r="9.4" fill="#fff"/><circle r="7.7" fill="#1a73e8"/></svg>
<svg class="di" style="left:1233.9px;top:1010.6px" width="56" height="56" viewBox="-28 -28 56 56"><defs><linearGradient id="yA" x1="0" y1="0" x2="0" y2="1"><stop offset="0" stop-color="#e2e2e5"/><stop offset="1" stop-color="#8e8e92"/></linearGradient></defs><rect x="-22" y="-22" width="44" height="44" rx="10" ry="10" fill="url(#yA)"/><circle r="18.5" fill="#3b3c3f"/><circle r="17.7" fill="none" stroke="#8a8b8e" stroke-width="1.7" stroke-dasharray="1.0 1.32"/><circle r="15.9" fill="#8f9093"/><circle r="14.3" fill="#36373a"/><circle r="12.5" fill="#66676a" stroke="#a6a7aa" stroke-width="1.4"/><circle r="8.3" fill="none" stroke="#48494c" stroke-width="3"/><path d="M0 0 L-6.62 -10.60" stroke="#adaeb1" stroke-width="1.8"/><path d="M0 0 L12.49 -0.44" stroke="#adaeb1" stroke-width="1.8"/><path d="M0 0 L-5.87 11.04" stroke="#adaeb1" stroke-width="1.8"/><circle r="2.1" fill="#adaeb1"/><circle cx="17" cy="-17.2" r="10.3" fill="#f2463e"/><text x="17" y="-13.4" text-anchor="middle" font-family="Liberation Sans, sans-serif" font-size="11" fill="#fff">1</text></svg>
<svg class="di" style="left:1290.3px;top:1010.6px" width="56" height="56" viewBox="-28 -28 56 56"><circle r="22.9" fill="#1ed760"/><g fill="none" stroke="#121212" stroke-linecap="round"><path d="M-13.4 -6.4 C-4 -9.6 7 -8.6 15 -3.6" stroke-width="4.3"/><path d="M-11.8 1.4 C-4 -1 5 -0.2 12.4 4" stroke-width="3.6"/><path d="M-10.4 8.6 C-4 6.8 4 7.4 10.2 11" stroke-width="3"/></g></svg>
<svg class="di" style="left:1372.0px;top:1010.6px" width="56" height="56" viewBox="-28 -28 56 56"><defs><linearGradient id="zA" x1="0" y1="0" x2="0" y2="1"><stop offset="0" stop-color="#dddde0"/><stop offset="1" stop-color="#c9c9cc"/></linearGradient></defs><rect x="-22" y="-22" width="44" height="44" rx="10" ry="10" fill="url(#zA)"/><rect x="-12" y="-16.6" width="23.4" height="33.2" rx="3.4" fill="#29292d"/><rect x="-9" y="-13.6" width="17.4" height="7" rx="1.2" fill="#4b4b50"/><circle cx="-7.4" cy="-2.2" r="2.1" fill="#cdd6e2"/><circle cx="-0.3" cy="-2.2" r="2.1" fill="#cdd6e2"/><circle cx="6.8" cy="-2.2" r="2.1" fill="#f59b22"/><circle cx="-7.4" cy="4.2" r="2.1" fill="#cdd6e2"/><circle cx="-0.3" cy="4.2" r="2.1" fill="#cdd6e2"/><circle cx="6.8" cy="4.2" r="2.1" fill="#f59b22"/><rect x="-9.4" y="8.8" width="11.2" height="4" rx="2" fill="#f2f2f4"/><circle cx="6.8" cy="10.8" r="2.1" fill="#f59b22"/></svg>
<svg class="di" style="left:1428.4px;top:1010.6px" width="56" height="56" viewBox="-28 -28 56 56"><defs><clipPath id="xC"><circle r="22.6"/></clipPath></defs><circle r="22.6" fill="#f57d20"/><g clip-path="url(#xC)"><path d="M17.60 13.80 L2.42 -15.17 A5.0 5.0 0 0 0 -5.62 -9.23 Z" fill="#fff"/><path d="M15.00 11.60 L-5.84 -3.86 A3.7 3.7 0 0 0 -9.36 2.66 Z" fill="#fff"/><path d="M6.60 8.80 L-12.95 4.31 A2.5 2.5 0 0 0 -13.45 9.29 Z" fill="#fff"/><path d="M-8.6 9.8 L-22 11.4 L-19 17 Z" fill="#fff"/></g></svg>
<svg class="di" style="left:1484.8px;top:1010.6px" width="56" height="56" viewBox="-28 -28 56 56"><defs><linearGradient id="iA" x1="0" y1="0" x2="0" y2="1"><stop offset="0" stop-color="#ffffff"/><stop offset="1" stop-color="#f2f2f4"/></linearGradient></defs><circle cx="-0.6" cy="-22.2" r="3.9" fill="none" stroke="#a9a4c6" stroke-width="1"/><rect x="-22" y="-22" width="44" height="44" rx="10" ry="10" fill="url(#iA)"/><circle cx="-0.6" cy="-22.2" r="3.9" fill="none" stroke="#b9bcc4" stroke-width="1" opacity=".7"/><path d="M-6 -10.8 H17.6" stroke="#9a9da4" stroke-width="1"/><rect x="9.4" y="-12.2" width="2.2" height="2.8" fill="#6d7077"/><path d="M-1.6 -18 L-6 -9.6 C-9 -5 -17.4 -2 -18.4 6 C-18.8 10.6 -16.6 13.6 -14.4 16" fill="none" stroke="#a4a8b0" stroke-width="1.7" stroke-linecap="round"/><path d="M0.4 -18 L4.8 -9.6 C7.8 -5 16.2 -2 17.2 6 C17.6 10.6 15.4 13.6 13.2 16" fill="none" stroke="#a4a8b0" stroke-width="1.7" stroke-linecap="round"/><path d="M-3 -19 L1.6 -12.6 M1.8 -19 L-2.8 -12.6" stroke="#8d9098" stroke-width="1.4"/><path d="M-9 7.2 L-7.6 5.8 L7.8 5.8 L9.2 7.2 L9.2 16.2 L-9 16.2 Z" fill="#2a2a2b"/><path d="M-7 8.6 H7.2 M-7 10.6 H7.2 M-7 12.6 H7.2" stroke="#4a4a4c" stroke-width=".7"/><rect x="-8.0" y="16.2" width="1.6" height="5.6" fill="#9a9ca2"/><rect x="-4.6" y="16.2" width="1.6" height="5.6" fill="#9a9ca2"/><rect x="-1.1" y="16.2" width="1.6" height="5.6" fill="#9a9ca2"/><rect x="2.4" y="16.2" width="1.6" height="5.6" fill="#9a9ca2"/><rect x="5.8" y="16.2" width="1.6" height="5.6" fill="#9a9ca2"/><circle cx="-0.4" cy="30.5" r="2.6" fill="#b09ada"/></svg>
<svg class="di" style="left:1566.2px;top:1010.6px" width="56" height="56" viewBox="-28 -28 56 56"><defs><linearGradient id="dA" x1="0" y1="0" x2="0" y2="1"><stop offset="0" stop-color="#f4f4f6"/><stop offset="1" stop-color="#e6e6e9"/></linearGradient></defs><path d="M-12.8 -26 H7 L12.4 -20.6 V-10 H-12.8 Z" fill="#dedee2"/><path d="M-15.2 -23.4 H5 L15 -13.4 V-10 H-15.2 Z" fill="#ebebee"/><path d="M-17.6 -20.6 H4.6 L17.6 -7.6 V25.2 H-17.6 Z" fill="url(#dA)"/><path d="M4.6 -20.6 L17.6 -7.6 H7.6 Q4.6 -7.6 4.6 -10.6 Z" fill="#fbfbfc" stroke="#c9c9ce" stroke-width=".5"/><path d="M6 -26 L12 -20.4 L8 -20.4 Z" fill="#8d8f8a"/><path d="M-14.6 -12 H1 M-14.6 -9 H2 M-14.6 -6 H0" stroke="#d6d6db" stroke-width="1.3" stroke-dasharray="2.2 .8"/><text x="-0.2" y="21.4" text-anchor="middle" font-family="Liberation Sans, sans-serif" font-size="6.6" fill="#8b8b90" letter-spacing=".1">PDF</text></svg>
<svg class="di" style="left:1622.6px;top:1010.6px" width="56" height="56" viewBox="-28 -28 56 56"><defs><linearGradient id="bA" x1="0" y1="0" x2="1" y2="0"><stop offset="0" stop-color="#4e4f53"/><stop offset=".22" stop-color="#707276"/><stop offset=".5" stop-color="#86888b"/><stop offset=".8" stop-color="#6e7073"/><stop offset="1" stop-color="#4c4d51"/></linearGradient><linearGradient id="bB" x1="0" y1="0" x2="0" y2="1"><stop offset="0" stop-color="#8a8c90"/><stop offset="1" stop-color="#55565a"/></linearGradient></defs><path d="M-15 -16 L-12 -24.6 L-6 -21 L-2 -25.6 L3 -21.6 L7.4 -26.4 L12 -22 L16 -23 L16.6 -15 Z" fill="#ecebe8"/><path d="M-9.4 -22 L-4 -24.4 L0.4 -17 L-6 -15.4 Z" fill="#3ea89a"/><path d="M2.6 -17 L7 -24 L10.6 -21.6 L7 -15 Z" fill="#8a7a55"/><path d="M-12.6 -17.4 L-10 -21.6 L-6.6 -16 Z" fill="#5d5a52"/><path d="M10.4 -17 L13.6 -21 L15.6 -16 Z" fill="#55524c"/><path d="M-19.2 -18.4 Q0 -13.4 19.3 -18.4 L15.4 20.6 Q15 24 11 24.4 Q0 25.6 -10.6 24.4 Q-14.4 24 -14.8 20.6 Z" fill="url(#bA)" fill-opacity=".93"/><path d="M-19.2 -18.8 Q0 -13.6 19.3 -18.8" fill="none" stroke="#9a9ca0" stroke-width="1.3"/><path d="M-6 -13 Q-4 6 -5.4 23" stroke="#8f9195" stroke-width="3.6" stroke-opacity=".35" fill="none"/></svg>
<svg class="di" style="left:1357.2px;top:1015px" width="4" height="51" viewBox="0 0 4 51"><path d="M2 .5V50.5" stroke="#b8a4e6" stroke-opacity=".5" stroke-width="1.2"/></svg>
<svg class="di" style="left:1551.3px;top:1015px" width="4" height="51" viewBox="0 0 4 51"><path d="M2 .5V50.5" stroke="#b8a4e6" stroke-opacity=".5" stroke-width="1.2"/></svg>
</body>
</html>
